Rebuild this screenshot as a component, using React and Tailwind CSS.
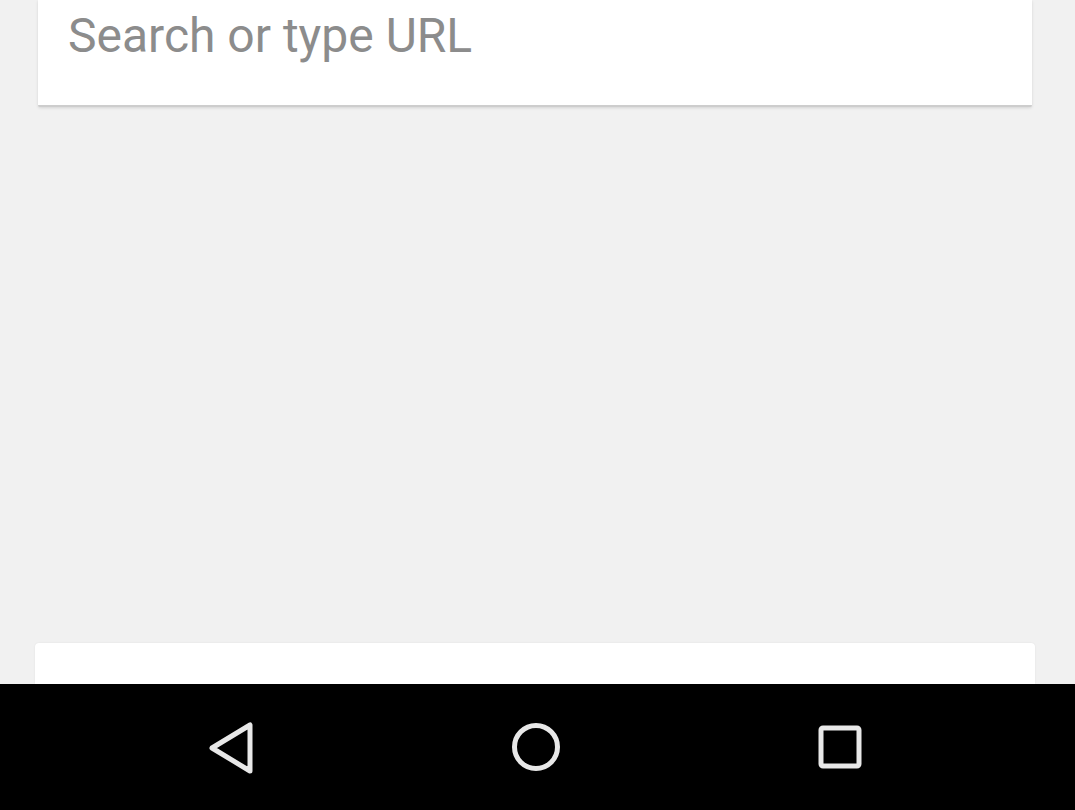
import React from 'react'

const NavBack = () => (
  <svg width="48" height="54" viewBox="0 0 48 54" fill="none">
    <path d="M43 4 L43 50 L5 27 Z" stroke="#e8e8e8" strokeWidth="5" strokeLinejoin="round" />
  </svg>
)

const NavHome = () => (
  <svg width="52" height="52" viewBox="0 0 52 52" fill="none">
    <circle cx="26" cy="26" r="21.5" stroke="#e8e8e8" strokeWidth="5" />
  </svg>
)

const NavRecents = () => (
  <svg width="46" height="46" viewBox="0 0 46 46" fill="none">
    <rect x="4" y="4" width="38" height="38" rx="2" stroke="#e8e8e8" strokeWidth="5" />
  </svg>
)

export default function App() {
  return (
    <div className="w-[1075px] h-[810px] bg-[#f1f1f1] flex flex-col overflow-hidden font-['Roboto',sans-serif]">
      {/* Search box (cut off at top) */}
      <div className="ml-[38px] w-[994px] h-[107px] bg-white rounded-b-[2px] border-b-2 border-[#cdcdcd] shadow-[0_1px_3px_rgba(0,0,0,0.12)] pl-[30px] flex">
        <span className="text-[48px] leading-none text-[#8c8c8c] mt-[12px]">Search or type URL</span>
      </div>

      <div className="flex-1" />

      {/* Next card peeking out */}
      <div className="ml-[35px] w-[1000px] h-[41px] bg-white rounded-t-[4px] shadow-[0_0_2px_rgba(0,0,0,0.08)]" />

      {/* Android nav bar */}
      <div className="h-[126px] bg-black flex items-center">
        <div className="w-[232px] flex justify-end">
          <div className="-mr-[23px] pt-[2px]">
            <NavBack />
          </div>
        </div>
        <div className="flex-1 flex justify-center">
          <NavHome />
        </div>
        <div className="w-[236px] flex justify-start">
          <div className="-ml-[22px]">
            <NavRecents />
          </div>
        </div>
      </div>
    </div>
  )
}
